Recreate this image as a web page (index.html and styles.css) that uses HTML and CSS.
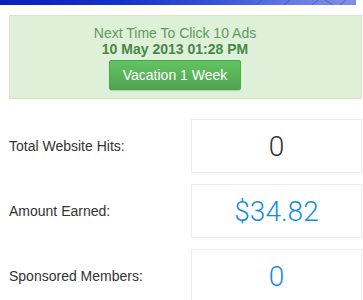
FILE: index.html
```html
<!DOCTYPE html>
<html>
<head>
<meta charset="utf-8">
<link rel="stylesheet" href="styles.css">
</head>
<body>
<div class="banner">
  <svg class="streaks" width="356" height="5" viewBox="0 0 356 5">
    <g stroke="#3a4fc0" stroke-width="1" opacity="0.6" fill="none">
      <path d="M170 5 L175 0"/><path d="M200 5 L205 0"/><path d="M228 5 L233 0"/>
      <path d="M256 5 L262 0"/><path d="M284 5 L290 0"/><path d="M312 5 L318 0"/>
      <path d="M325 0 L333 5"/><path d="M340 5 L346 0"/>
    </g>
  </svg>
</div>
<div class="page">
  <div class="alert">
    <div class="alert-line">Next Time To Click 10 Ads</div>
    <div class="alert-date">10 May 2013 01:28 PM</div>
    <button class="btn">Vacation 1 Week</button>
  </div>
  <div class="stats">
    <div class="row">
      <div class="label">Total Website Hits:</div>
      <div class="box">0</div>
    </div>
    <div class="row">
      <div class="label">Amount Earned:</div>
      <div class="box blue">$34.82</div>
    </div>
    <div class="row">
      <div class="label">Sponsored Members:</div>
      <div class="box blue">0</div>
    </div>
  </div>
</div>
</body>
</html>
```

FILE: styles.css
```css
html, body {
  margin: 0;
  padding: 0;
  background: #fff;
  font-family: "Liberation Sans", Arial, sans-serif;
}
.banner {
  width: 356px;
  height: 5px;
  background: linear-gradient(90deg, #0b20b8 0%, #1533c8 35%, #3552d8 60%, #6a7fe6 85%, #7d8fe8 100%);
  overflow: hidden;
}
.streaks { display: block; }
.page {
  padding: 10px 1px 0 9px;
}
.alert {
  box-sizing: border-box;
  height: 84px;
  background: #dff0d8;
  border: 1px solid #d3e7c4;
  display: flex;
  flex-direction: column;
  align-items: center;
  padding: 9px 35px 0 14px;
  color: #5d9a5d;
}
.alert-line {
  font-size: 14px;
  line-height: 16px;
}
.alert-date {
  font-size: 14px;
  line-height: 16px;
  font-weight: bold;
  color: #468847;
}
.btn {
  margin-top: 3px;
  width: 132px;
  height: 30px;
  border: 1px solid #4aa44a;
  border-radius: 2px;
  background: linear-gradient(#62c462, #51a351);
  color: #fff;
  font-family: "Liberation Sans", Arial, sans-serif;
  font-size: 14px;
  padding: 0;
  box-shadow: 0 1px 1px rgba(0,0,0,0.15);
}
.stats {
  margin-top: 20px;
  display: flex;
  flex-direction: column;
  gap: 11px;
}
.row {
  display: grid;
  grid-template-columns: 182px 171px;
  align-items: center;
}
.label {
  font-size: 14px;
  color: #333;
}
.box {
  box-sizing: border-box;
  height: 54px;
  border: 1px solid #ececec;
  display: flex;
  align-items: center;
  justify-content: center;
  font-family: Roboto, "Liberation Sans", sans-serif;
  font-weight: 300;
  font-size: 28px;
  color: #333;
}
.box.blue { color: #1a8ed4; }
```
